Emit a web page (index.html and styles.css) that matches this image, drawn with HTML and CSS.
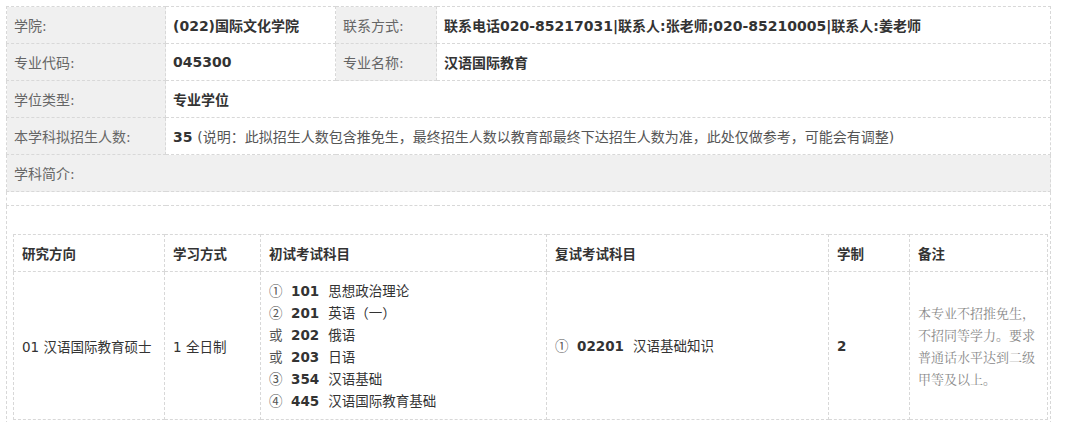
FILE: index.html
```html
<!DOCTYPE html>
<html lang="zh-CN">
<head>
    <meta charset="UTF-8">
    <title>专业详情</title>
    <link rel="stylesheet" href="styles.css">
</head>
<body>
    <div class="page">
        <table class="info">
            <colgroup>
                <col class="c1"><col class="c2"><col class="c3"><col>
            </colgroup>
            <tr>
                <td class="lbl">学院:</td>
                <td class="val">(022)国际文化学院</td>
                <td class="lbl">联系方式:</td>
                <td class="val">联系电话020-85217031|联系人:张老师;020-85210005|联系人:姜老师</td>
            </tr>
            <tr>
                <td class="lbl">专业代码:</td>
                <td class="val">045300</td>
                <td class="lbl">专业名称:</td>
                <td class="val">汉语国际教育</td>
            </tr>
            <tr>
                <td class="lbl">学位类型:</td>
                <td class="val" colspan="3">专业学位</td>
            </tr>
            <tr>
                <td class="lbl">本学科拟招生人数:</td>
                <td class="val" colspan="3"><b>35</b> <span class="note">(说明：此拟招生人数包含推免生，最终招生人数以教育部最终下达招生人数为准，此处仅做参考，可能会有调整)</span></td>
            </tr>
            <tr>
                <td class="lbl" colspan="4">学科简介:</td>
            </tr>
            <tr class="gap">
                <td colspan="4"></td>
            </tr>
            <tr>
                <td class="holder" colspan="4">
                    <table class="dirs">
                        <colgroup>
                            <col class="d1"><col class="d2"><col class="d3"><col class="d4"><col class="d5"><col>
                        </colgroup>
                        <tr class="head">
                            <th>研究方向</th>
                            <th>学习方式</th>
                            <th>初试考试科目</th>
                            <th>复试考试科目</th>
                            <th>学制</th>
                            <th>备注</th>
                        </tr>
                        <tr class="body">
                            <td>01 汉语国际教育硕士</td>
                            <td>1 全日制</td>
                            <td class="subj">
                                <div><span class="mk">①</span><b>101</b>思想政治理论</div>
                                <div><span class="mk">②</span><b>201</b>英语（一）</div>
                                <div><span class="mk">或</span><b>202</b>俄语</div>
                                <div><span class="mk">或</span><b>203</b>日语</div>
                                <div><span class="mk">③</span><b>354</b>汉语基础</div>
                                <div><span class="mk">④</span><b>445</b>汉语国际教育基础</div>
                            </td>
                            <td class="subj">
                                <div><span class="mk">①</span><b>02201</b>汉语基础知识</div>
                            </td>
                            <td><b>2</b></td>
                            <td class="remark">本专业不招推免生，不招同等学力。要求普通话水平达到二级甲等及以上。</td>
                        </tr>
                    </table>
                </td>
            </tr>
        </table>
    </div>
</body>
</html>
```

FILE: styles.css
```css
body {
    margin: 0;
    background: #fff;
    font-family: "DejaVu Sans", "Noto Sans CJK SC", sans-serif;
    font-size: 14px;
    color: #333;
}
.page {
    padding: 6px 0 0 6px;
    width: 1045px;
}
table {
    border-collapse: collapse;
}
.info {
    width: 1045px;
    table-layout: fixed;
}
.info .c1 { width: 159px; }
.info .c2 { width: 170px; }
.info .c3 { width: 101px; }
.info > tbody > tr > td {
    border: 1px dashed #d8d8d8;
    height: 36px;
    padding: 0 7px;
    vertical-align: middle;
}
.lbl {
    background: #f0f0f0;
    color: #666;
}
.val {
    background: #fff;
    font-weight: bold;
    color: #333;
}
.note {
    font-weight: normal;
    color: #555;
}
.info > tbody > tr.gap > td {
    height: 13px;
}
.info > tbody > tr > td.holder {
    padding: 28px 2px 3px 6px;
    height: auto;
}
.dirs {
    width: 1035px;
    table-layout: fixed;
    font-size: 13.5px;
}
.dirs .d1 { width: 151px; }
.dirs .d2 { width: 96px; }
.dirs .d3 { width: 286px; }
.dirs .d4 { width: 282px; }
.dirs .d5 { width: 81px; }
.dirs th,
.dirs td {
    border: 1px dashed #d8d8d8;
    padding: 0 8px;
    text-align: left;
    vertical-align: middle;
}
.dirs .head th {
    height: 36px;
    font-weight: bold;
    color: #333;
}
.dirs .body td {
    height: 147px;
}
.subj div {
    height: 22px;
    line-height: 22px;
    white-space: nowrap;
}
.subj .mk {
    display: inline-block;
    width: 22px;
    line-height: 1;
    font-family: "Noto Sans CJK SC", sans-serif;
    color: #555;
}
.subj b {
    display: inline-block;
    margin-right: 9px;
}
.remark {
    font-family: "Noto Serif CJK SC", "AR PL UMing CN", serif;
    font-size: 13px;
    color: #888;
    line-height: 22px;
    padding-right: 10px !important;
}
```
